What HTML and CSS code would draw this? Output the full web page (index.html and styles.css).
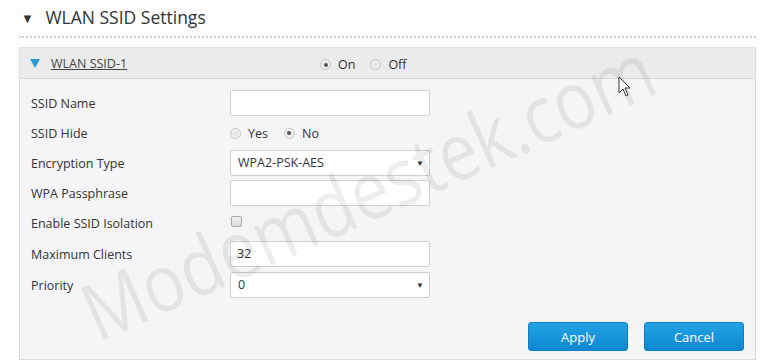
FILE: index.html
```html
<!DOCTYPE html>
<html lang="en">
<head>
    <meta charset="UTF-8">
    <title>WLAN SSID Settings</title>
    <link rel="stylesheet" href="styles.css">
</head>
<body>
    <div class="page">
        <h2 class="section-title"><span class="caret">&#9660;</span> WLAN SSID Settings</h2>
        <div class="panel">
            <div class="panel-head">
                <span class="blue-caret"></span>
                <a class="panel-name" href="#">WLAN SSID-1</a>
                <div class="switch">
                    <label><span class="radio checked"></span> On</label>
                    <label><span class="radio"></span> Off</label>
                </div>
            </div>
            <div class="panel-body">
                <div class="row">
                    <span class="label">SSID Name</span>
                    <div class="field"></div>
                </div>
                <div class="row">
                    <span class="label">SSID Hide</span>
                    <div class="choices">
                        <label><span class="radio"></span> Yes</label>
                        <label><span class="radio checked"></span> No</label>
                    </div>
                </div>
                <div class="row">
                    <span class="label">Encryption Type</span>
                    <div class="field select">WPA2-PSK-AES<span class="arrow">&#9660;</span></div>
                </div>
                <div class="row">
                    <span class="label">WPA Passphrase</span>
                    <div class="field"></div>
                </div>
                <div class="row">
                    <span class="label">Enable SSID Isolation</span>
                    <span class="checkbox"></span>
                </div>
                <div class="row tall">
                    <span class="label">Maximum Clients</span>
                    <div class="field">32</div>
                </div>
                <div class="row">
                    <span class="label">Priority</span>
                    <div class="field select">0<span class="arrow">&#9660;</span></div>
                </div>
                <div class="actions">
                    <button class="btn">Apply</button>
                    <button class="btn">Cancel</button>
                </div>
            </div>
        </div>
        <div class="watermark">Modemdestek.com</div>
        <svg class="cursor" width="14" height="22" viewBox="0 0 14 22">
            <path d="M1 1 L1 17 L5 13 L8 20 L10 19 L7 12 L12 12 Z" fill="#fff" stroke="#333" stroke-width="1"/>
        </svg>
    </div>
</body>
</html>
```

FILE: styles.css
```css
body {
    margin: 0;
    background: #fdfdfd;
    font-family: 'Open Sans', 'Noto Sans', sans-serif;
    color: #333;
}
.page {
    position: relative;
    width: 771px;
    height: 360px;
    overflow: hidden;
    padding: 0 15px 0 19px;
    box-sizing: border-box;
}
.section-title {
    margin: 0;
    padding: 5px 0 6px 2px;
    font-size: 17.5px;
    font-weight: normal;
    color: #333;
    line-height: 24px;
    border-bottom: 2px dotted #cfcfcf;
}
.caret {
    font-size: 13px;
    margin-right: 7px;
    vertical-align: 1px;
    color: #333;
}
.panel {
    margin-top: 9px;
    border: 1px solid #dcdcdc;
    border-top: 1px solid #e2e2e2;
    background: #f5f5f7;
}
.panel-head {
    display: flex;
    align-items: center;
    height: 30px;
    background: #ebebeb;
    border-bottom: 1px solid #d8d8d8;
    padding-left: 10px;
}
.blue-caret {
    width: 0;
    height: 0;
    border-left: 5px solid transparent;
    border-right: 5px solid transparent;
    border-top: 9px solid #2c9ad6;
    margin-right: 11px;
    margin-top: 1px;
}
.panel-name {
    color: #444;
    font-size: 12.5px;
    text-decoration: underline;
    width: 269px;
}
.switch, .choices {
    display: flex;
    gap: 15px;
    font-size: 12.5px;
    color: #333;
}
.choices {
    gap: 16px;
}
.switch {
    margin-top: 3px;
}
.switch label, .choices label {
    display: flex;
    align-items: center;
    gap: 7px;
}
.radio {
    width: 11px;
    height: 11px;
    border-radius: 50%;
    border: 1px solid #c4c4c4;
    background: radial-gradient(circle, #e2e2e2 0, #f8f8f8 100%);
    box-sizing: border-box;
    position: relative;
}
.radio.checked::after {
    content: "";
    position: absolute;
    left: 2.5px;
    top: 2.5px;
    width: 4px;
    height: 4px;
    border-radius: 50%;
    background: #555;
}
.panel-body {
    padding: 9px 10px 8px 11px;
}
.row {
    display: flex;
    align-items: center;
    height: 30px;
    font-size: 12.5px;
}
.row.tall {
    height: 32px;
}
.label {
    width: 199px;
    color: #333;
}
.field {
    width: 200px;
    height: 26px;
    box-sizing: border-box;
    border: 1px solid #cfcfcf;
    border-radius: 2px;
    background: #fff;
    padding: 0 6px;
    line-height: 24px;
    color: #333;
    position: relative;
}
.field.select {
    padding-left: 7px;
}
.arrow {
    position: absolute;
    right: 5px;
    top: 0;
    font-size: 8px;
    color: #333;
}
.checkbox {
    width: 11px;
    height: 11px;
    border: 1px solid #aaa;
    border-radius: 2px;
    background: linear-gradient(#f0f0f0, #dcdcdc);
    box-sizing: border-box;
    margin-left: 1px;
    margin-top: -3px;
}
.actions {
    display: flex;
    justify-content: flex-end;
    gap: 16px;
    margin-top: 22px;
    padding-right: 1px;
}
.btn {
    width: 100px;
    height: 29px;
    border: 1px solid #0f7fc0;
    border-radius: 3px;
    background: linear-gradient(#23a3e6, #0c87cf);
    color: #fff;
    font-family: 'Open Sans', 'Noto Sans', sans-serif;
    font-size: 13px;
}
.watermark {
    position: absolute;
    left: 98px;
    top: 272px;
    font-size: 80px;
    font-weight: 400;
    line-height: 1;
    color: rgba(0, 0, 0, 0.07);
    transform: rotate(-24deg) scaleX(0.86);
    transform-origin: 0 71px;
    white-space: nowrap;
    pointer-events: none;
}
.cursor {
    position: absolute;
    left: 618px;
    top: 76px;
}
```
